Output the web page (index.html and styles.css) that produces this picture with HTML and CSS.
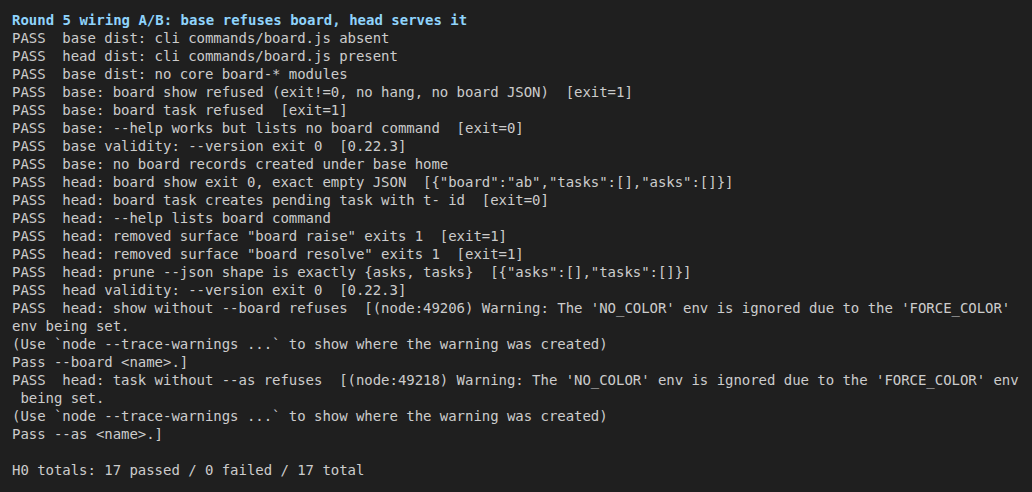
FILE: index.html
```html
<!DOCTYPE html>
<html>
<head>
<meta charset="utf-8">
<link rel="stylesheet" href="styles.css">
</head>
<body>
<div class="term">
<div class="title">Round 5 wiring A/B: base refuses board, head serves it</div>
<pre class="out">PASS  base dist: cli commands/board.js absent
PASS  head dist: cli commands/board.js present
PASS  base dist: no core board-* modules
PASS  base: board show refused (exit!=0, no hang, no board JSON)  [exit=1]
PASS  base: board task refused  [exit=1]
PASS  base: --help works but lists no board command  [exit=0]
PASS  base validity: --version exit 0  [0.22.3]
PASS  base: no board records created under base home
PASS  head: board show exit 0, exact empty JSON  [{"board":"ab","tasks":[],"asks":[]}]
PASS  head: board task creates pending task with t- id  [exit=0]
PASS  head: --help lists board command
PASS  head: removed surface "board raise" exits 1  [exit=1]
PASS  head: removed surface "board resolve" exits 1  [exit=1]
PASS  head: prune --json shape is exactly {asks, tasks}  [{"asks":[],"tasks":[]}]
PASS  head validity: --version exit 0  [0.22.3]
PASS  head: show without --board refuses  [(node:49206) Warning: The 'NO_COLOR' env is ignored due to the 'FORCE_COLOR'
env being set.
(Use `node --trace-warnings ...` to show where the warning was created)
Pass --board &lt;name&gt;.]
PASS  head: task without --as refuses  [(node:49218) Warning: The 'NO_COLOR' env is ignored due to the 'FORCE_COLOR' env
 being set.
(Use `node --trace-warnings ...` to show where the warning was created)
Pass --as &lt;name&gt;.]

H0 totals: 17 passed / 0 failed / 17 total</pre>
</div>
</body>
</html>
```

FILE: styles.css
```css
html, body {
  margin: 0;
  padding: 0;
  background: #1f1f1f;
}
.term {
  padding: 11px 12px;
  font-family: "DejaVu Sans Mono", monospace;
  font-size: 14px;
  line-height: 18px;
  color: #cccccc;
}
.title {
  color: #8fd3fb;
  font-weight: bold;
  white-space: pre;
}
.out {
  margin: 0;
  font: inherit;
  letter-spacing: -0.04px;
  white-space: pre;
}
```
